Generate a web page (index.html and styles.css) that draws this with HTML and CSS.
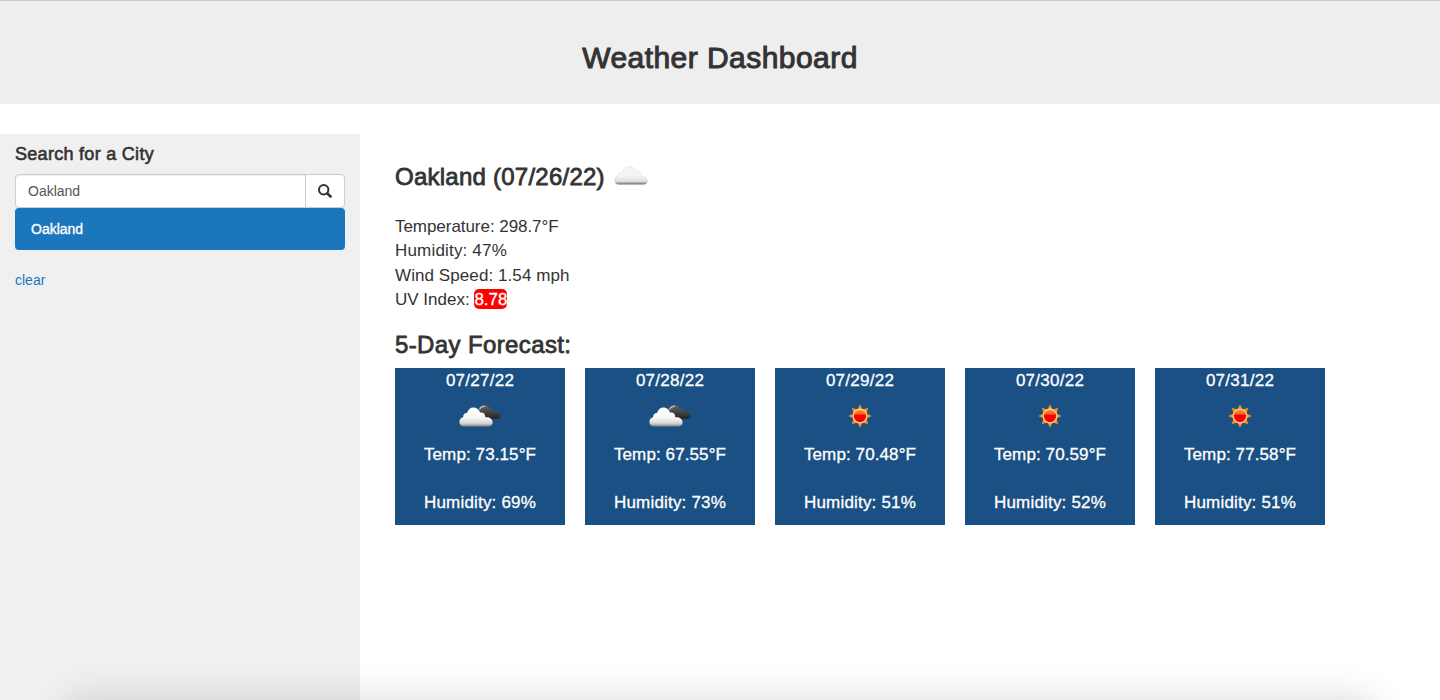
FILE: index.html
```html
<!DOCTYPE html>
<html lang="en">
<head>
<meta charset="utf-8">
<title>Weather Dashboard</title>
<link rel="stylesheet" href="styles.css">
</head>
<body>
<svg class="defs" aria-hidden="true">
  <defs>
    <linearGradient id="white-cloud" x1="0" y1="0" x2="0" y2="1">
      <stop offset="0" stop-color="#fff"/><stop offset=".55" stop-color="#f8f8f8"/><stop offset=".83" stop-color="#d5d5d5"/><stop offset="1" stop-color="#858585"/>
    </linearGradient>
    <linearGradient id="pale-cloud" x1="0" y1="0" x2="0" y2="1">
      <stop offset="0" stop-color="#f6f6f6"/><stop offset=".5" stop-color="#f4f4f4"/><stop offset=".82" stop-color="#dedede"/><stop offset=".9" stop-color="#999"/><stop offset="1" stop-color="#777"/>
    </linearGradient>
    <linearGradient id="dark-cloud" x1="0" y1="0" x2="0" y2="1">
      <stop offset="0" stop-color="#666"/><stop offset=".5" stop-color="#444"/><stop offset="1" stop-color="#242424"/>
    </linearGradient>
    <linearGradient id="sun-core" x1="0" y1="0" x2="0" y2="1">
      <stop offset="0" stop-color="#ff9a3c"/><stop offset=".35" stop-color="#f4621c"/><stop offset=".45" stop-color="#f00"/><stop offset="1" stop-color="#f20000"/>
    </linearGradient>
    <symbol id="cloud" viewBox="0 0 34 20">
      <path stroke="#dcdcdc" stroke-width=".6" d="M5.500 18.800C2.400 18.800 .5 17 .5 14.500C.5 12 2.300 10.200 4.600 9.900C4.300 7.500 6.300 5.600 8.500 6C9.500 2.600 12.200 .8 15.300 .8C19 .8 21.500 3 22.200 5.600C24.700 4.900 27 6.600 27 9.300C27 9.800 27 10.300 26.800 10.700C30.400 10 33.500 12 33.500 15C33.500 17.400 31.500 18.800 29 18.800Z"/>
    </symbol>
    <symbol id="clouds" viewBox="0 0 42 22">
      <path fill="url(#dark-cloud)" d="M20 12V5.500C20.500 2.500 23 .3 26 .3C28.500 .4 30.500 2 31 4C33.500 3.300 35.700 4.800 36 7.300C39 6.800 41.600 8.300 41.600 10.800C41.600 13 39.800 14 37.500 14H24Z"/>
      <path d="M20.500 4.500C21.400 2.200 23.500 1 26 1.300" fill="none" stroke="#b9b9b9" stroke-width="1.300"/>
      <path fill="url(#white-cloud)" d="M5.300 21.500C2.200 21.500 .4 19.500 .4 17C.4 14.500 2 12.700 4.200 12.300C3.800 9.700 5.700 7.700 8 8C9 4.500 11.300 2.500 14.300 2.500C17.900 2.500 20.300 4.900 21 7.600C24 6.800 26.500 8.900 26.300 12.300C30 11.700 33.600 13.700 33.600 17.400C33.600 20 31.500 21.500 29 21.500Z"/>
    </symbol>
    <symbol id="sun" viewBox="0 0 24 24">
      <path fill="#f0931e" d="M12 .3L14.600 5.500L20.200 3.800L18.500 9.400L23.700 12L18.500 14.600L20.200 20.200L14.600 18.500L12 23.700L9.400 18.500L3.800 20.200L5.500 14.600L.3 12L5.500 9.400L3.800 3.800L9.400 5.500Z"/>
      <circle cx="12" cy="12" r="6.800" fill="url(#sun-core)" stroke="#ffd28a" stroke-width="1.200"/>
    </symbol>
  </defs>
</svg>
<header class="banner"><h1>Weather Dashboard</h1></header>
<div class="layout">
  <aside class="sidebar">
    <h4>Search for a City</h4>
    <div class="search">
      <input class="search-input" type="text" value="Oakland" aria-label="City">
      <button class="search-button" aria-label="Search">
        <svg width="14" height="14" viewBox="0 0 14 14" fill="none" stroke="#333"><circle cx="5.700" cy="5.700" r="4.700" stroke-width="2"/><path d="M9.300 9.300l3.200 3.200" stroke-width="2.600" stroke-linecap="round"/></svg>
      </button>
    </div>
    <div class="history">Oakland</div>
    <a class="clear">clear</a>
  </aside>
  <main class="content">
    <h3 class="city"><span>Oakland (07/26/22)</span><svg width="34" height="20" fill="url(#pale-cloud)"><use href="#cloud"/></svg></h3>
    <div class="current">
      <p class="temperature">Temperature: 298.7°F</p>
      <p class="humidity">Humidity: 47%</p>
      <p class="wind">Wind Speed: 1.54 mph</p>
      <p>UV Index: <span class="uv">8.78</span></p>
    </div>
    <h3 class="forecast-title">5-Day Forecast:</h3>
    <div class="forecast">
      <div class="card"><p class="date">07/27/22</p><div class="icon"><svg width="42" height="22"><use href="#clouds"/></svg></div><p class="temp">Temp: 73.15°F</p><p class="humidity">Humidity: 69%</p></div>
      <div class="card"><p class="date">07/28/22</p><div class="icon"><svg width="42" height="22"><use href="#clouds"/></svg></div><p class="temp">Temp: 67.55°F</p><p class="humidity">Humidity: 73%</p></div>
      <div class="card"><p class="date">07/29/22</p><div class="icon"><svg width="24" height="24"><use href="#sun"/></svg></div><p class="temp">Temp: 70.48°F</p><p class="humidity">Humidity: 51%</p></div>
      <div class="card"><p class="date">07/30/22</p><div class="icon"><svg width="24" height="24"><use href="#sun"/></svg></div><p class="temp">Temp: 70.59°F</p><p class="humidity">Humidity: 52%</p></div>
      <div class="card"><p class="date">07/31/22</p><div class="icon"><svg width="24" height="24"><use href="#sun"/></svg></div><p class="temp">Temp: 77.58°F</p><p class="humidity">Humidity: 51%</p></div>
    </div>
  </main>
</div>
<div class="bottom-edge"><div class="bottom-shadow"></div></div>
</body>
</html>
```
FILE: styles.css
```css
* { box-sizing: border-box; }
body { margin: 0; height: 700px; overflow: hidden; display: flex; flex-direction: column; background: #fff; color: #333; font: 14px/20px "Liberation Sans", Arial, sans-serif; }
h1, h3, h4, p { margin: 0; }
h1, h3, h4 { font-weight: 400; -webkit-text-stroke: .8px currentColor; }
.defs { position: absolute; width: 0; height: 0; }
.banner { height: 104px; flex: none; background: #eee; border-top: 1px solid #c9c9c9; padding-top: 40px; text-align: center; }
h1 { font-size: 30px; line-height: 33px; letter-spacing: .45px; -webkit-text-stroke-width: 1px; }
.layout { margin-top: 30px; flex: 1; display: flex; }
.sidebar { width: 360px; background: #f0f0f0; padding: 10px 15px; }
h4 { font-size: 18px; line-height: 20px; margin-bottom: 10px; letter-spacing: .29px; -webkit-text-stroke-width: .6px; }
.search { display: flex; height: 34px; }
.search-input { width: 291px; border: 1px solid #ccc; border-radius: 4px 0 0 4px; padding: 0 12px; font: inherit; color: #555; background: #fff; box-shadow: inset 0 1px 1px rgba(0,0,0,.075); }
.search-button { width: 40px; margin-left: -1px; border: 1px solid #ccc; border-radius: 0 4px 4px 0; background: #fff; padding: 0; display: flex; align-items: center; justify-content: center; }
.search-button svg { margin-top: -1px; }
.history { height: 42px; border-radius: 4px; background: #1c76bc; color: #fff; padding: 11px 16px; -webkit-text-stroke: .35px #fff; }
.clear { display: block; margin-top: 20px; color: #1c76bc; }
.content { padding: 30px 35px; }
h3 { font-size: 24px; line-height: 26px; }
.city { display: flex; gap: 9px; letter-spacing: .24px; }
.city svg { margin-top: 2px; -webkit-text-stroke: 0; }
.current { margin-top: 25px; font-size: 17px; line-height: 24.3px; }
.temperature { letter-spacing: -.05px; }
.humidity { letter-spacing: .18px; }
.wind { letter-spacing: .08px; }
.uv { display: inline-block; height: 20px; line-height: 21px; background: #f00; color: #fff; border-radius: 5px; -webkit-text-stroke: .3px #fff; }
.forecast-title { margin-top: 20px; letter-spacing: .38px; }
.forecast { display: flex; gap: 20px; margin-top: 10px; }
.card { width: 170px; height: 157px; padding-top: 1px; background: #1a5083; color: #fff; text-align: center; font-size: 17px; line-height: 24px; -webkit-text-stroke: .3px #fff; }
.date { letter-spacing: .25px; }
.icon { height: 50px; display: flex; align-items: center; justify-content: center; }
.card .icon svg { margin-top: -4px; }
.temp { margin-bottom: 24px; letter-spacing: .1px; }
.bottom-edge { position: absolute; left: 0; right: 0; bottom: 0; height: 60px; overflow: hidden; }
.bottom-shadow { margin: 68px 75px 0; height: 60px; box-shadow: 0 0 36px 8px rgba(0,0,0,.16); }
```
